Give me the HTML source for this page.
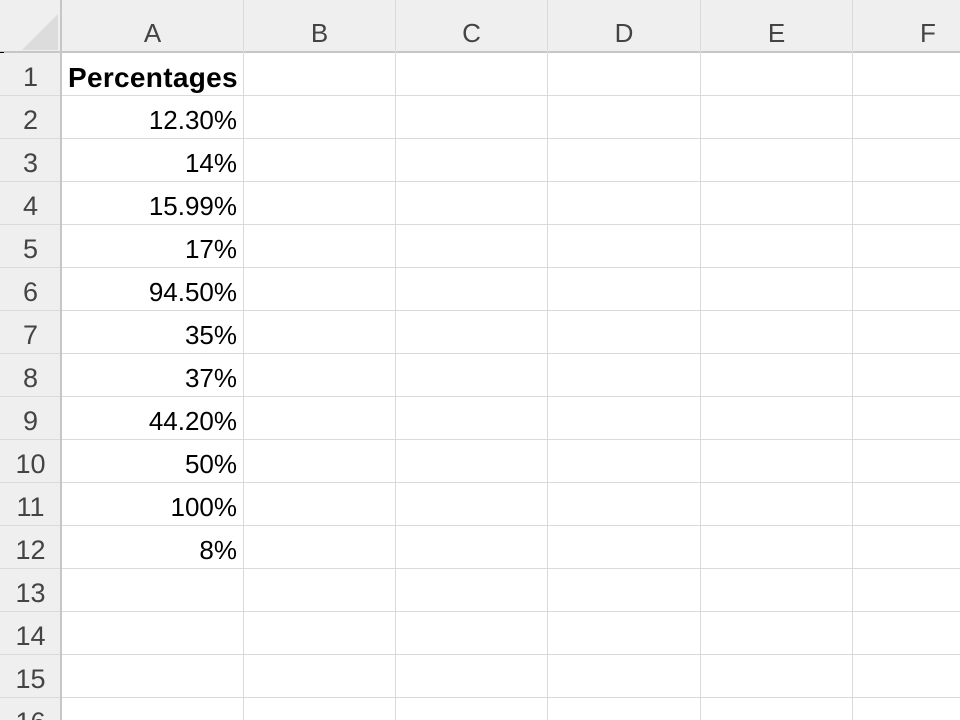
<!DOCTYPE html>
<html><head><style>
body{margin:0;width:960px;height:720px;overflow:hidden;background:#fff;font-family:"Liberation Sans",sans-serif;position:relative}
.hdr{position:absolute;left:0;top:0;width:960px;height:53px;background:#efefef;border-bottom:2px solid #c6c6c6;box-sizing:border-box}
.rh{position:absolute;left:0;top:0;width:62px;height:720px;background:#efefef}
.v{position:absolute;top:0;height:720px;width:1px;background:#dadada}
.r{position:absolute;left:0;width:960px;height:43px}
.r .n{position:absolute;left:0;top:3px;width:61px;text-align:center;font-size:27px;color:#444;line-height:43px}
.r .t{position:absolute;right:723px;top:3px;font-size:26px;color:#000;line-height:43px}
.r .b{position:absolute;left:0;bottom:0;width:960px;height:1px;background:#dadada}
.c{position:absolute;top:0;height:52px;line-height:66px;font-size:26px;color:#444;text-align:center}
</style></head><body>
<div class="rh"></div>
<div class="hdr"></div>
<div style="position:absolute;left:22px;top:14px;width:0;height:0;border-left:36px solid transparent;border-bottom:36px solid #dcdcdc"></div>
<div style="position:absolute;left:0;top:52px;width:4px;height:1px;background:#000"></div>
<div class="v" style="left:243px"></div><div class="v" style="left:395px"></div><div class="v" style="left:547px"></div><div class="v" style="left:700px"></div><div class="v" style="left:852px"></div>
<div class="c" style="left:62px;width:181px">A</div>
<div class="c" style="left:244px;width:151px">B</div>
<div class="c" style="left:396px;width:151px">C</div>
<div class="c" style="left:548px;width:152px">D</div>
<div class="c" style="left:701px;width:151px">E</div>
<div class="c" style="left:853px;width:150px">F</div>
<div class="r" style="top:53px"><div class="b"></div><div class="n">1</div><div class="t" style="right:auto;left:68px;font-weight:bold;font-size:28px;letter-spacing:0.3px">Percentages</div></div>
<div class="r" style="top:96px"><div class="b"></div><div class="n">2</div><div class="t">12.30%</div></div>
<div class="r" style="top:139px"><div class="b"></div><div class="n">3</div><div class="t">14%</div></div>
<div class="r" style="top:182px"><div class="b"></div><div class="n">4</div><div class="t">15.99%</div></div>
<div class="r" style="top:225px"><div class="b"></div><div class="n">5</div><div class="t">17%</div></div>
<div class="r" style="top:268px"><div class="b"></div><div class="n">6</div><div class="t">94.50%</div></div>
<div class="r" style="top:311px"><div class="b"></div><div class="n">7</div><div class="t">35%</div></div>
<div class="r" style="top:354px"><div class="b"></div><div class="n">8</div><div class="t">37%</div></div>
<div class="r" style="top:397px"><div class="b"></div><div class="n">9</div><div class="t">44.20%</div></div>
<div class="r" style="top:440px"><div class="b"></div><div class="n">10</div><div class="t">50%</div></div>
<div class="r" style="top:483px"><div class="b"></div><div class="n">11</div><div class="t">100%</div></div>
<div class="r" style="top:526px"><div class="b"></div><div class="n">12</div><div class="t">8%</div></div>
<div class="r" style="top:569px"><div class="b"></div><div class="n">13</div></div>
<div class="r" style="top:612px"><div class="b"></div><div class="n">14</div></div>
<div class="r" style="top:655px"><div class="b"></div><div class="n">15</div></div>
<div class="r" style="top:698px;height:22px;overflow:hidden"><div class="n">16</div></div>
<div style="position:absolute;left:60px;top:0;width:2px;height:720px;background:#c6c6c6"></div>
</body></html>
